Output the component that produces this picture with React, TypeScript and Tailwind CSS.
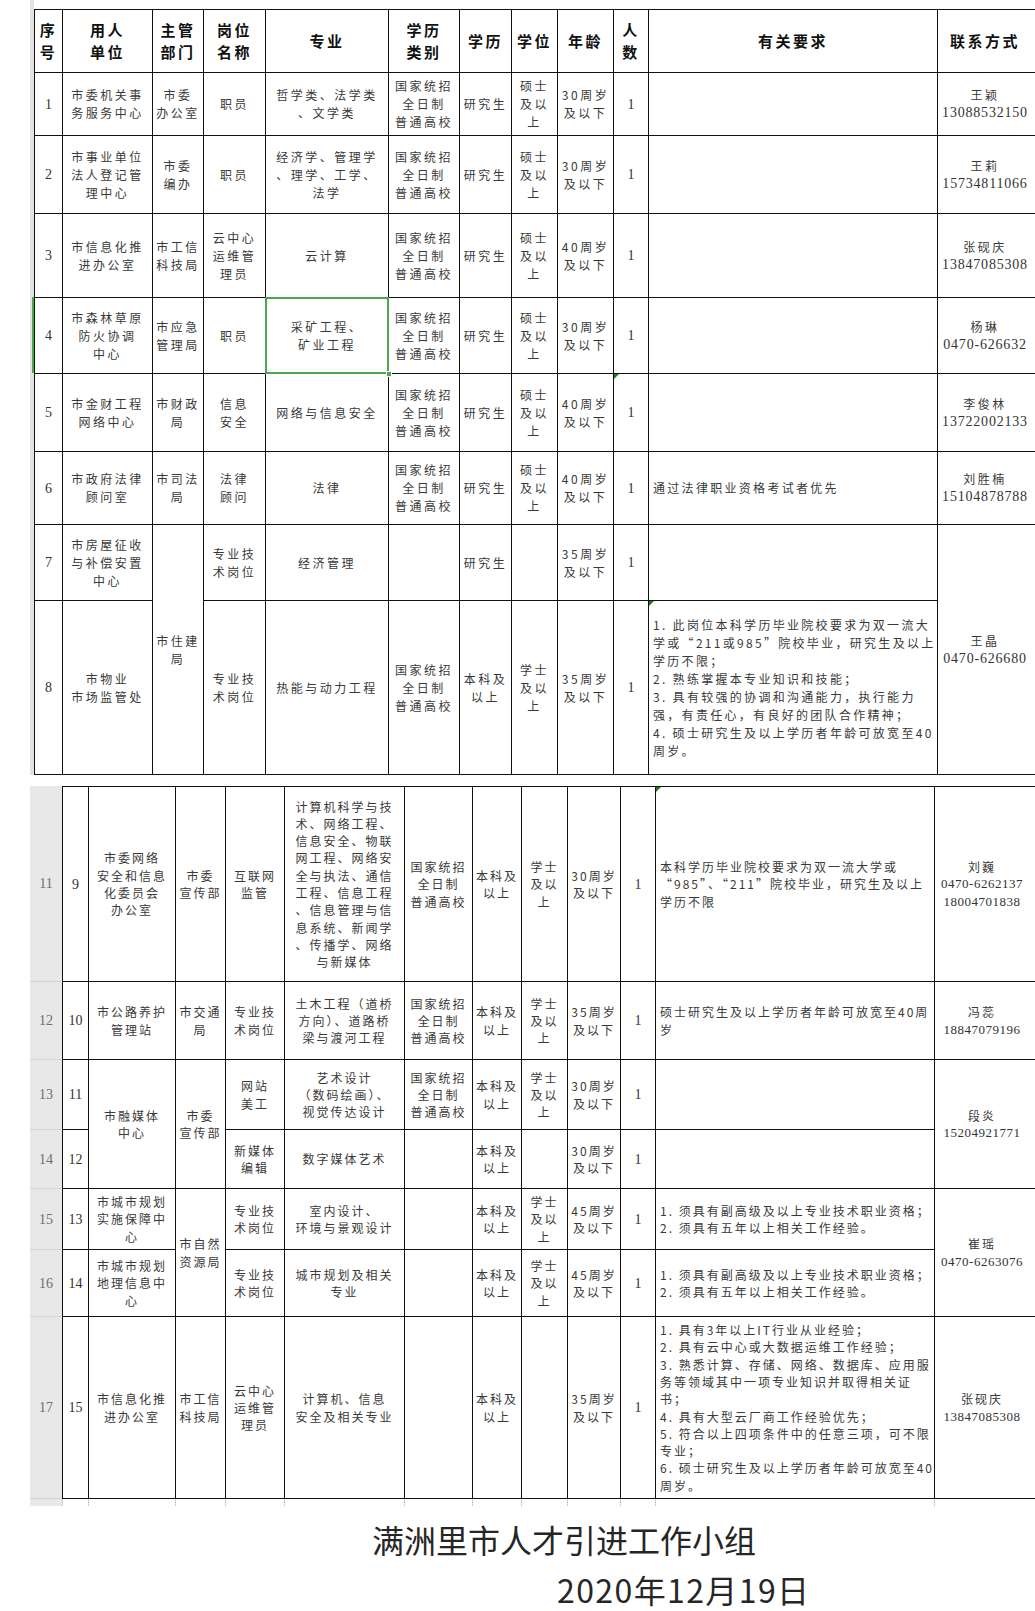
import React from 'react';

type Row = {
  h: string;
  rn?: string;
  no: string;
  unit?: string;
  unitSpan?: number;
  dept?: string;
  deptSpan?: number;
  post: string;
  major: string;
  kind: string;
  edu: string;
  deg: string;
  age: string;
  n: string;
  req: string;
  reqMark?: boolean;
  nMark?: boolean;
  contact?: string[];
  contactSpan?: number;
  pick?: boolean;
};

const K = '国家统招\n全日制\n普通高校';
const M = '硕士\n及以\n上';
const X = '学士\n及以\n上';
const BK = '本科及\n以上';

const serif = "font-['Liberation_Serif',serif]";
const ln = 'border-r border-b border-[#111]';
const T1 = 'text-[12px] leading-[18px] tracking-[2.5px] text-[#393939]';
const T2 = 'text-[12px] leading-[17.3px] tracking-[2px] text-[#393939]';
const RQ1 = 'text-[12px] leading-[18px] tracking-[2.3px] text-[#393939]';
const RQ2 = 'text-[12px] leading-[17.3px] tracking-[2px] text-[#393939]';
const HD = 'text-[15px] leading-[22px] tracking-[2.5px] font-bold text-[#111]';

const green = 'bg-[#4da64d]';

const table1: Row[] = [
  { h: 'h-[63px]', no: '1', unit: '市委机关事\n务服务中心', dept: '市委\n办公室', post: '职员', major: '哲学类、法学类\n、文学类', kind: K, edu: '研究生', deg: M, age: '30周岁\n及以下', n: '1', req: '', contact: ['王颖', '13088532150'] },
  { h: 'h-[78px]', no: '2', unit: '市事业单位\n法人登记管\n理中心', dept: '市委\n编办', post: '职员', major: '经济学、管理学\n、理学、工学、\n法学', kind: K, edu: '研究生', deg: M, age: '30周岁\n及以下', n: '1', req: '', contact: ['王莉', '15734811066'] },
  { h: 'h-[84px]', no: '3', unit: '市信息化推\n进办公室', dept: '市工信\n科技局', post: '云中心\n运维管\n理员', major: '云计算', kind: K, edu: '研究生', deg: M, age: '40周岁\n及以下', n: '1', req: '', contact: ['张砚庆', '13847085308'] },
  { h: 'h-[76px]', no: '4', unit: '市森林草原\n防火协调\n中心', dept: '市应急\n管理局', post: '职员', major: '采矿工程、\n矿业工程', kind: K, edu: '研究生', deg: M, age: '30周岁\n及以下', n: '1', req: '', contact: ['杨琳', '0470-626632'], pick: true },
  { h: 'h-[78px]', no: '5', unit: '市金财工程\n网络中心', dept: '市财政\n局', post: '信息\n安全', major: '网络与信息安全', kind: K, edu: '研究生', deg: M, age: '40周岁\n及以下', n: '1', nMark: true, req: '', contact: ['李俊林', '13722002133'] },
  { h: 'h-[73px]', no: '6', unit: '市政府法律\n顾问室', dept: '市司法\n局', post: '法律\n顾问', major: '法律', kind: K, edu: '研究生', deg: M, age: '40周岁\n及以下', n: '1', req: '通过法律职业资格考试者优先', contact: ['刘胜楠', '15104878788'] },
  { h: 'h-[76px]', no: '7', unit: '市房屋征收\n与补偿安置\n中心', dept: '市住建\n局', deptSpan: 2, post: '专业技\n术岗位', major: '经济管理', kind: '', edu: '研究生', deg: '', age: '35周岁\n及以下', n: '1', req: '', contact: ['王晶', '0470-626680'], contactSpan: 2 },
  {
    h: 'h-[174px]', no: '8', unit: '市物业\n市场监管处', post: '专业技\n术岗位', major: '热能与动力工程', kind: K, edu: BK, deg: X, age: '35周岁\n及以下', n: '1', reqMark: true,
    req: '1. 此岗位本科学历毕业院校要求为双一流大\n学或“211或985”院校毕业，研究生及以上\n学历不限；\n2. 熟练掌握本专业知识和技能；\n3. 具有较强的协调和沟通能力，执行能力\n强，有责任心，有良好的团队合作精神；\n4. 硕士研究生及以上学历者年龄可放宽至40\n周岁。',
  },
];

const table2: Row[] = [
  {
    h: 'h-[196px]', rn: '11', no: '9', unit: '市委网络\n安全和信息\n化委员会\n办公室', dept: '市委\n宣传部', post: '互联网\n监管',
    major: '计算机科学与技\n术、网络工程、\n信息安全、物联\n网工程、网络安\n全与执法、通信\n工程、信息工程\n、信息管理与信\n息系统、新闻学\n、传播学、网络\n与新媒体',
    kind: K, edu: BK, deg: X, age: '30周岁\n及以下', n: '1', reqMark: true,
    req: '本科学历毕业院校要求为双一流大学或\n“985”、“211”院校毕业，研究生及以上\n学历不限',
    contact: ['刘巍', '0470-6262137', '18004701838'],
  },
  { h: 'h-[78px]', rn: '12', no: '10', unit: '市公路养护\n管理站', dept: '市交通\n局', post: '专业技\n术岗位', major: '土木工程（道桥\n方向）、道路桥\n梁与渡河工程', kind: K, edu: BK, deg: X, age: '35周岁\n及以下', n: '1', req: '硕士研究生及以上学历者年龄可放宽至40周\n岁', contact: ['冯蕊', '18847079196'] },
  { h: 'h-[70px]', rn: '13', no: '11', unit: '市融媒体\n中心', unitSpan: 2, dept: '市委\n宣传部', deptSpan: 2, post: '网站\n美工', major: '艺术设计\n（数码绘画）、\n视觉传达设计', kind: K, edu: BK, deg: X, age: '30周岁\n及以下', n: '1', req: '', contact: ['段炎', '15204921771'], contactSpan: 2 },
  { h: 'h-[59px]', rn: '14', no: '12', post: '新媒体\n编辑', major: '数字媒体艺术', kind: '', edu: BK, deg: '', age: '30周岁\n及以下', n: '1', req: '' },
  { h: 'h-[61px]', rn: '15', no: '13', unit: '市城市规划\n实施保障中\n心', dept: '市自然\n资源局', deptSpan: 2, post: '专业技\n术岗位', major: '室内设计、\n环境与景观设计', kind: '', edu: BK, deg: X, age: '45周岁\n及以下', n: '1', req: '1. 须具有副高级及以上专业技术职业资格；\n2. 须具有五年以上相关工作经验。', contact: ['崔瑶', '0470-6263076'], contactSpan: 2 },
  { h: 'h-[67px]', rn: '16', no: '14', unit: '市城市规划\n地理信息中\n心', post: '专业技\n术岗位', major: '城市规划及相关\n专业', kind: '', edu: BK, deg: X, age: '45周岁\n及以下', n: '1', req: '1. 须具有副高级及以上专业技术职业资格；\n2. 须具有五年以上相关工作经验。' },
  {
    h: 'h-[182px]', rn: '17', no: '15', unit: '市信息化推\n进办公室', dept: '市工信\n科技局', post: '云中心\n运维管\n理员', major: '计算机、信息\n安全及相关专业', kind: '', edu: BK, deg: '', age: '35周岁\n及以下', n: '1',
    req: '1. 具有3年以上IT行业从业经验；\n2. 具有云中心或大数据运维工作经验；\n3. 熟悉计算、存储、网络、数据库、应用服\n务等领域其中一项专业知识并取得相关证\n书；\n4. 具有大型云厂商工作经验优先；\n5. 符合以上四项条件中的任意三项，可不限\n专业；\n6. 硕士研究生及以上学历者年龄可放宽至40\n周岁。',
    contact: ['张砚庆', '13847085308'],
  },
];

const cols1 = ['w-[29px]', 'w-[90px]', 'w-[51px]', 'w-[62px]', 'w-[123px]', 'w-[71px]', 'w-[52px]', 'w-[46px]', 'w-[56px]', 'w-[35px]', 'w-[289px]', 'w-[120px]'];
const cols2 = ['w-[32px]', 'w-[27px]', 'w-[87px]', 'w-[50px]', 'w-[59px]', 'w-[120px]', 'w-[68px]', 'w-[49px]', 'w-[46px]', 'w-[53px]', 'w-[35px]', 'w-[279px]', 'w-[120px]'];

function Cell({ v, rs, cls = '', mark = false, pick = false }: { v?: React.ReactNode; rs?: number; cls?: string; mark?: boolean; pick?: boolean }) {
  return (
    <td rowSpan={rs} className={`${ln} ${mark || pick ? 'relative' : ''} p-0 align-middle whitespace-pre ${cls}`}>
      {mark && <span className="absolute left-0 top-0 h-0 w-0 border-t-[5px] border-r-[5px] border-t-[#1f7a1f] border-r-transparent" />}
      {pick && (
        <>
          <span className="absolute -inset-px border-2 border-[#4da64d]" />
          <span className={`absolute -right-[4px] -bottom-[4px] h-[6px] w-[6px] border border-white ${green}`} />
        </>
      )}
      {v}
    </td>
  );
}

function Contact({ c, t2 }: { c: string[]; t2?: boolean }) {
  const [name, ...phones] = c;
  return (
    <div className="w-[94px] whitespace-nowrap text-center">
      <div className={t2 ? T2 : T1}>{name}</div>
      {phones.map((p) => (
        <div
          key={p}
          className={`${serif} ${t2 ? 'text-[13px] leading-[17.3px] tracking-[0.5px]' : 'text-[14px] leading-[18px] tracking-[0.8px]'} text-[#333]`}
        >
          {p}
        </div>
      ))}
    </div>
  );
}

function Body({ r, t2, first }: { r: Row; t2?: boolean; first?: boolean }) {
  const tx = t2 ? T2 : T1;
  const rq = t2 ? RQ2 : RQ1;
  const top = first ? 'border-t' : '';
  const num = `${serif} text-center text-[14px] text-[#333]`;
  return (
    <tr className={r.h}>
      {t2 && (
        <td className={`border-b border-[#d4d4d4] bg-[#e8e8e8] p-0 text-center align-middle text-[14px] text-[#6e6e6e] ${serif}`}>{r.rn}</td>
      )}
      <Cell cls={`border-l ${top} ${num}`} v={r.no} />
      {r.unit !== undefined && <Cell rs={r.unitSpan} cls={`${top} text-center ${tx}`} v={r.unit} />}
      {r.dept !== undefined && <Cell rs={r.deptSpan} cls={`${top} text-center ${tx}`} v={r.dept} />}
      <Cell cls={`${top} text-center ${tx}`} v={r.post} />
      <Cell cls={`${top} text-center ${tx}`} v={r.major} pick={r.pick} />
      <Cell cls={`${top} text-center ${tx}`} v={r.kind} />
      <Cell cls={`${top} text-center ${tx}`} v={r.edu} />
      <Cell cls={`${top} text-center ${tx}`} v={r.deg} />
      <Cell cls={`${top} text-center ${tx}`} v={r.age} />
      <Cell cls={`${top} ${num} text-[13px]`} v={r.n} mark={r.nMark} />
      <Cell cls={`${top} pl-[4px] text-left ${rq}`} v={r.req} mark={r.reqMark} />
      {r.contact !== undefined && <Cell rs={r.contactSpan} cls={`${top} text-left`} v={<Contact c={r.contact} t2={t2} />} />}
    </tr>
  );
}

const heads = ['序\n号', '用人\n单位', '主管\n部门', '岗位\n名称', '专业', '学历\n类别', '学历', '学位', '年龄', '人\n数', '有关要求'];

export default function App() {
  return (
    <div className="relative h-[1611px] w-[1035px] overflow-hidden bg-white font-['Noto_Sans_CJK_SC',sans-serif]">
      <div className="flex">
        <div className="relative ml-[30px] w-[4px] shrink-0 bg-[#e2e2e2]">
          <span className={`absolute right-0 top-[297px] h-[76px] w-[2px] ${green}`} />
        </div>
        <div className="shrink-0 pt-[9px]">
          <table className="w-[1024px] table-fixed border-separate border-spacing-0">
            <colgroup>
              {cols1.map((c, i) => (
                <col key={i} className={c} />
              ))}
            </colgroup>
            <tbody>
              <tr className="h-[64px]">
                {heads.map((h, i) => (
                  <Cell key={h} cls={`border-t ${i === 0 ? 'border-l' : ''} text-center ${HD}`} v={h} />
                ))}
                <Cell
                  cls="border-t text-left"
                  v={<div className={`w-[94px] text-center ${HD}`}>联系方式</div>}
                />
              </tr>
              {table1.map((r) => (
                <Body key={r.no} r={r} />
              ))}
            </tbody>
          </table>
        </div>
      </div>

      <div className="ml-[30px] mt-[11px]">
        <table className="w-[1025px] table-fixed border-separate border-spacing-0">
          <colgroup>
            {cols2.map((c, i) => (
              <col key={i} className={c} />
            ))}
          </colgroup>
          <tbody>
            {table2.map((r, i) => (
              <Body key={r.no} r={r} t2 first={i === 0} />
            ))}
            <tr className="h-[7px]">
              <td className="bg-[#e8e8e8] p-0" />
              {cols2.slice(1).map((c, i) => (
                <td key={c + i} className={`border-r border-[#d0d0d0] p-0 ${i === 0 ? 'border-l' : ''}`} />
              ))}
            </tr>
          </tbody>
        </table>
      </div>

      <div className="mt-[8px] text-[32px] text-[#262626]">
        <div className="pl-[372px] leading-[51px]">满洲里市人才引进工作小组</div>
        <div className="pl-[557px] pt-[5px] leading-[38px] tracking-[1.4px]">2020年12月19日</div>
      </div>
    </div>
  );
}
